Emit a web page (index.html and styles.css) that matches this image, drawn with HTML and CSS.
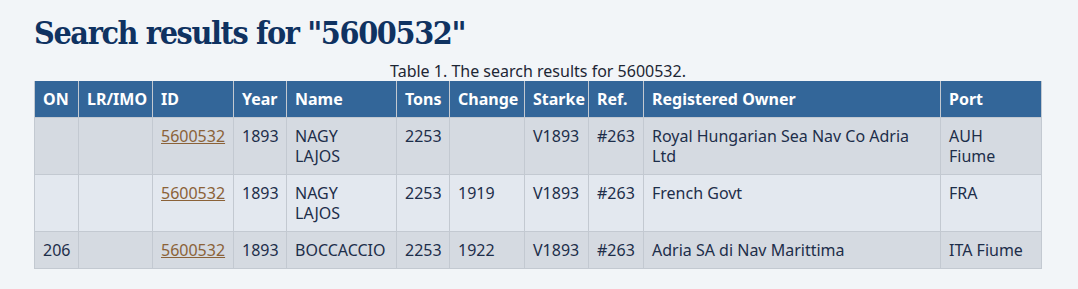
FILE: index.html
```html
<!DOCTYPE html>
<html lang="en">
<head>
<meta charset="utf-8">
<title>Search results</title>
<link rel="stylesheet" href="styles.css">
</head>
<body>
<main class="page">
  <h1 class="title">Search results for "5600532"</h1>
  <table class="results">
    <caption class="caption">Table 1. The search results for 5600532.</caption>
    <colgroup>
      <col class="c-on"><col class="c-lr"><col class="c-id"><col class="c-year"><col class="c-name"><col class="c-tons"><col class="c-change"><col class="c-starke"><col class="c-ref"><col class="c-owner"><col class="c-port">
    </colgroup>
    <thead>
      <tr>
        <th>ON</th><th>LR/IMO</th><th>ID</th><th>Year</th><th>Name</th><th>Tons</th><th>Change</th><th>Starke</th><th>Ref.</th><th>Registered Owner</th><th>Port</th>
      </tr>
    </thead>
    <tbody>
      <tr>
        <td></td><td></td><td><a class="link" href="#">5600532</a></td><td>1893</td><td>NAGY<br>LAJOS</td><td>2253</td><td></td><td>V1893</td><td>#263</td><td>Royal Hungarian Sea Nav Co Adria Ltd</td><td>AUH Fiume</td>
      </tr>
      <tr>
        <td></td><td></td><td><a class="link" href="#">5600532</a></td><td>1893</td><td>NAGY<br>LAJOS</td><td>2253</td><td>1919</td><td>V1893</td><td>#263</td><td>French Govt</td><td>FRA</td>
      </tr>
      <tr>
        <td>206</td><td></td><td><a class="link" href="#">5600532</a></td><td>1893</td><td>BOCCACCIO</td><td>2253</td><td>1922</td><td>V1893</td><td>#263</td><td>Adria SA di Nav Marittima</td><td>ITA Fiume</td>
      </tr>
    </tbody>
  </table>
</main>
</body>
</html>
```

FILE: styles.css
```css
html, body {
  margin: 0;
  background: #f2f5f8;
}
body {
  font-family: "Noto Sans", "Open Sans", sans-serif;
  font-size: 16px;
  color: #1d2e4a;
}
.page {
  padding: 13px 37px 0 34px;
}
.title {
  font-family: "DejaVu Serif Condensed", "DejaVu Serif", serif;
  font-weight: bold;
  font-size: 32px;
  line-height: 40px;
  letter-spacing: -1.37px;
  color: #0f3261;
  margin: 0 0 8px;
}
.results {
  width: 1007px;
  table-layout: fixed;
  border-collapse: collapse;
  line-height: 20px;
}
.caption {
  color: #1d2634;
  font-size: 16px;
  line-height: 20px;
  padding: 0;
}
.results th,
.results td {
  padding: 8px 8px;
  text-align: left;
  vertical-align: top;
  border: 1px solid #c3c9d1;
}
.results th {
  background: #336699;
  color: #ffffff;
  font-weight: bold;
  border-top: none;
  border-bottom: none;
}
.results tbody tr:nth-child(odd) td { background: #d5dae1; }
.results tbody tr:nth-child(even) td { background: #e3e8ef; }
.link {
  color: #8b6238;
  text-decoration: underline;
}
.c-on { width: 44px; }
.c-lr { width: 74px; }
.c-id { width: 81px; }
.c-year { width: 53px; }
.c-name { width: 110px; }
.c-tons { width: 53px; }
.c-change { width: 75px; }
.c-starke { width: 64px; }
.c-ref { width: 55px; }
.c-owner { width: 297px; }
.c-port { width: 101px; }
```
